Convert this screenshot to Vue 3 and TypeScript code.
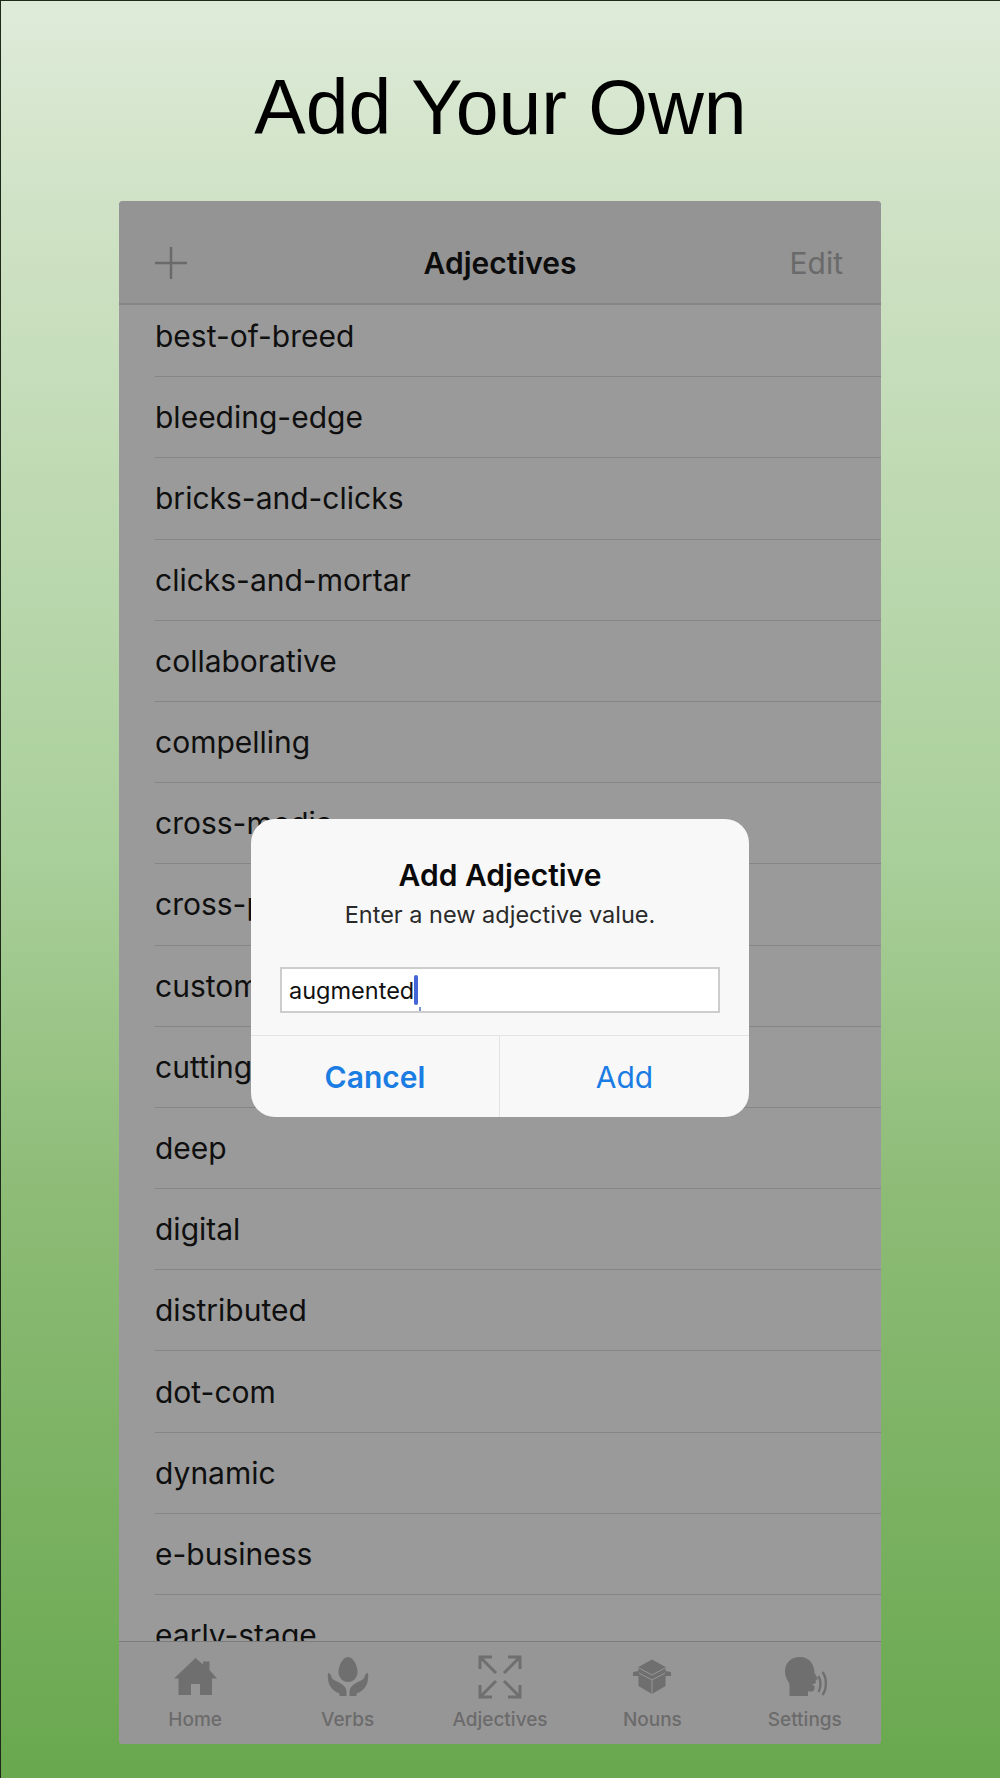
<template>
  <div class="page">
    <h1 class="headline">Add Your Own</h1>

    <div class="phone">
      <!-- 导航栏 -->
      <header class="navbar">
        <svg class="plus" viewBox="0 0 32 32" width="32" height="32">
          <path d="M16 0V32M0 16H32" stroke="#6a6a6a" stroke-width="2.5" fill="none" />
        </svg>
        <span class="nav-title">Adjectives</span>
        <span class="nav-edit">Edit</span>
      </header>

      <!-- 列表 -->
      <div class="list">
        <div class="list-scroll">
          <div v-for="word in words" :key="word" class="row">
            <span>{{ word }}</span>
          </div>
        </div>
      </div>

      <!-- 底部tab -->
      <nav class="tabbar">
        <div v-for="tab in tabs" :key="tab" class="tab">
          <svg v-if="tab === 'Home'" class="tab-icon" viewBox="0 0 44 44" fill="#6f6f6f">
            <path d="M22.5 3 L30 9.5 V6.5 H36.5 V15 L44 23.500 H39 V40 H27 V29 H18 V40 H5.500 V23.500 H1 Z" />
          </svg>
          <svg v-else-if="tab === 'Verbs'" class="tab-icon" viewBox="0 0 44 44" fill="#6f6f6f">
            <path d="M22 2 C27.500 2 31.500 11 31.500 17 C31.500 23 27 27 22 27 C17 27 12.500 23 12.500 17 C12.500 11 16.500 2 22 2 Z" />
            <path d="M2 18 C4 18 5 20 5.500 22 C6 24 8 25 10 26 C13 27 16 29 18 31 C20 33 20.500 35 20.500 37 V41 H13.500 V38.500 C9 37 4 33 2.500 27 C2 24 1.500 21 2 18 Z" />
            <path d="M42 18 C40 18 39 20 38.500 22 C38 24 36 25 34 26 C31 27 28 29 26 31 C24 33 23.500 35 23.500 37 V41 H30.500 V38.500 C35 37 40 33 41.500 27 C42 24 42.500 21 42 18 Z" />
          </svg>
          <svg v-else-if="tab === 'Adjectives'" class="tab-icon" viewBox="0 0 44 44" fill="none" stroke="#6f6f6f" stroke-width="3">
            <path d="M2 14V2H14M2 2L18 18" />
            <path d="M30 2H42V14M42 2L26 18" />
            <path d="M2 30V42H14M2 42L18 26" />
            <path d="M42 30V42H30M42 42L26 26" />
          </svg>
          <svg v-else-if="tab === 'Nouns'" class="tab-icon" viewBox="0 0 44 44" fill="#6f6f6f">
            <path d="M22 4.500 L35.500 12 V31 L22 39 L8.500 31 V12 Z" />
            <path d="M3 17 L9 16 V21 H3 Z" />
            <path d="M41 17 L35 16 V21 H41 Z" />
            <path d="M9 18 L22 25 L35 18 M22 25 V39 M9 13 L22 20 L35 13" fill="none" stroke="#979697" stroke-width="1" />
          </svg>
          <svg v-else class="tab-icon" viewBox="0 0 44 44" fill="#6f6f6f">
            <path d="M17 2 C8 2 2 8 2 16 C2 22 5 26 6.500 29 V41 H25 V36 C27 37 31 37 31.500 34 L31.500 31 L29 29.500 L33 28 L32.500 25.500 C34 25 35 24 34.500 23 L31.500 18 C31.500 10 27 2 17 2 Z" />
            <path d="M35.500 21 C38 26 38 32 35.500 37 M39.500 17 C44 23 44 34 39.500 40" fill="none" stroke="#6f6f6f" stroke-width="2.400" />
          </svg>
          <span class="tab-label">{{ tab }}</span>
        </div>
      </nav>

      <!-- 弹窗 -->
      <div class="dialog">
        <div class="dialog-body">
          <div class="dialog-title">Add Adjective</div>
          <div class="dialog-text">Enter a new adjective value.</div>
          <div class="dialog-input">
            <span>augmented</span><i class="caret"></i>
          </div>
        </div>
        <div class="dialog-buttons">
          <button type="button" class="btn btn-cancel">Cancel</button>
          <button type="button" class="btn">Add</button>
        </div>
      </div>
    </div>
  </div>
</template>

<script setup lang="ts">
const words: string[] = [
  'best-of-breed',
  'bleeding-edge',
  'bricks-and-clicks',
  'clicks-and-mortar',
  'collaborative',
  'compelling',
  'cross-media',
  'cross-platform',
  'customized',
  'cutting-edge',
  'deep',
  'digital',
  'distributed',
  'dot-com',
  'dynamic',
  'e-business',
  'early-stage'
]

const tabs: string[] = ['Home', 'Verbs', 'Adjectives', 'Nouns', 'Settings']
</script>

<style>
html,
body {
  margin: 0;
}
</style>

<style scoped>
.page {
  box-sizing: border-box;
  width: 1000px;
  height: 1778px;
  padding-top: 63px;
  border-top: 1px solid #1d2a1a;
  border-left: 1px solid #1d2a1a;
  background: linear-gradient(180deg, #deebd9 0%, #cfe2c5 12%, #a9cf9a 48%, #8cbb75 68%, #69a84f 100%);
  font-family: Inter, "Liberation Sans", sans-serif;
}

.headline {
  margin: 0 0 51px;
  height: 86px;
  line-height: 86px;
  text-align: center;
  font-family: "Liberation Sans", Arial, sans-serif;
  font-size: 77px;
  font-weight: 400;
  color: #000;
}

.phone {
  position: relative;
  width: 762px;
  height: 1543px;
  margin-left: 118px;
  display: flex;
  flex-direction: column;
  border-radius: 4px;
  overflow: hidden;
  background: #9a9a9a;
}

.navbar {
  flex: none;
  box-sizing: border-box;
  height: 104px;
  padding: 46px 38px 0 36px;
  display: flex;
  justify-content: space-between;
  align-items: flex-start;
  position: relative;
  background: #949494;
  border-bottom: 2px solid #858585;
}

.plus {
  width: 32px;
  height: 32px;
}

.nav-title {
  position: absolute;
  left: 0;
  right: 0;
  top: 43px;
  text-align: center;
  font-size: 30px;
  line-height: 38px;
  font-weight: 600;
  color: #0c0c0c;
}

.nav-edit {
  font-size: 30px;
  line-height: 32px;
  color: #6a6a6a;
}

.list {
  flex: 1;
  min-height: 0;
  overflow: hidden;
}

.list-scroll {
  margin-top: -9px;
  padding-left: 36px;
}

.row {
  box-sizing: border-box;
  height: 81.2px;
  display: flex;
  align-items: center;
  border-bottom: 1px solid #858585;
  font-size: 30px;
  color: #0f0f0f;
}

.tabbar {
  flex: none;
  box-sizing: border-box;
  height: 103px;
  display: grid;
  grid-template-columns: repeat(5, 1fr);
  background: #979697;
  border-top: 1px solid #7b7b7b;
}

.tab {
  display: flex;
  flex-direction: column;
  align-items: center;
  padding-top: 13px;
}

.tab-icon {
  width: 44px;
  height: 44px;
  overflow: visible;
}

.tab-label {
  margin-top: 10px;
  font-size: 19px;
  line-height: 22px;
  font-weight: 500;
  color: #6b6b6b;
}

.dialog {
  position: absolute;
  left: 132px;
  top: 618px;
  width: 498px;
  height: 298px;
  display: flex;
  flex-direction: column;
  border-radius: 24px;
  background: #f8f8f8;
}

.dialog-body {
  flex: 1;
  box-sizing: border-box;
  padding: 37px 29px 0;
  text-align: center;
}

.dialog-title {
  font-size: 30px;
  line-height: 38px;
  font-weight: 600;
  color: #0a0a0a;
}

.dialog-text {
  margin-top: 6px;
  font-size: 23.5px;
  line-height: 30px;
  color: #2a2a2a;
}

.dialog-input {
  box-sizing: border-box;
  height: 46px;
  margin-top: 37px;
  padding-left: 7px;
  display: flex;
  align-items: center;
  text-align: left;
  border: 2px solid #cdcdcd;
  background: #fff;
  font-size: 23.5px;
  color: #111;
}

.caret {
  position: relative;
  display: block;
  width: 4px;
  height: 30px;
  background: #4465d6;
  border-radius: 2px;
}

.caret::after {
  content: '';
  position: absolute;
  left: 5px;
  top: 32px;
  width: 2px;
  height: 4px;
  background: #7d93c9;
}

.dialog-buttons {
  flex: none;
  height: 81px;
  display: grid;
  grid-template-columns: 1fr 1fr;
  border-top: 1px solid #e4e4e4;
}

.btn {
  padding: 0;
  border: none;
  background: none;
  font-family: inherit;
  font-size: 30px;
  color: #1b7de3;
}

.btn-cancel {
  font-weight: 600;
  border-right: 1px solid #e4e4e4;
}
</style>
